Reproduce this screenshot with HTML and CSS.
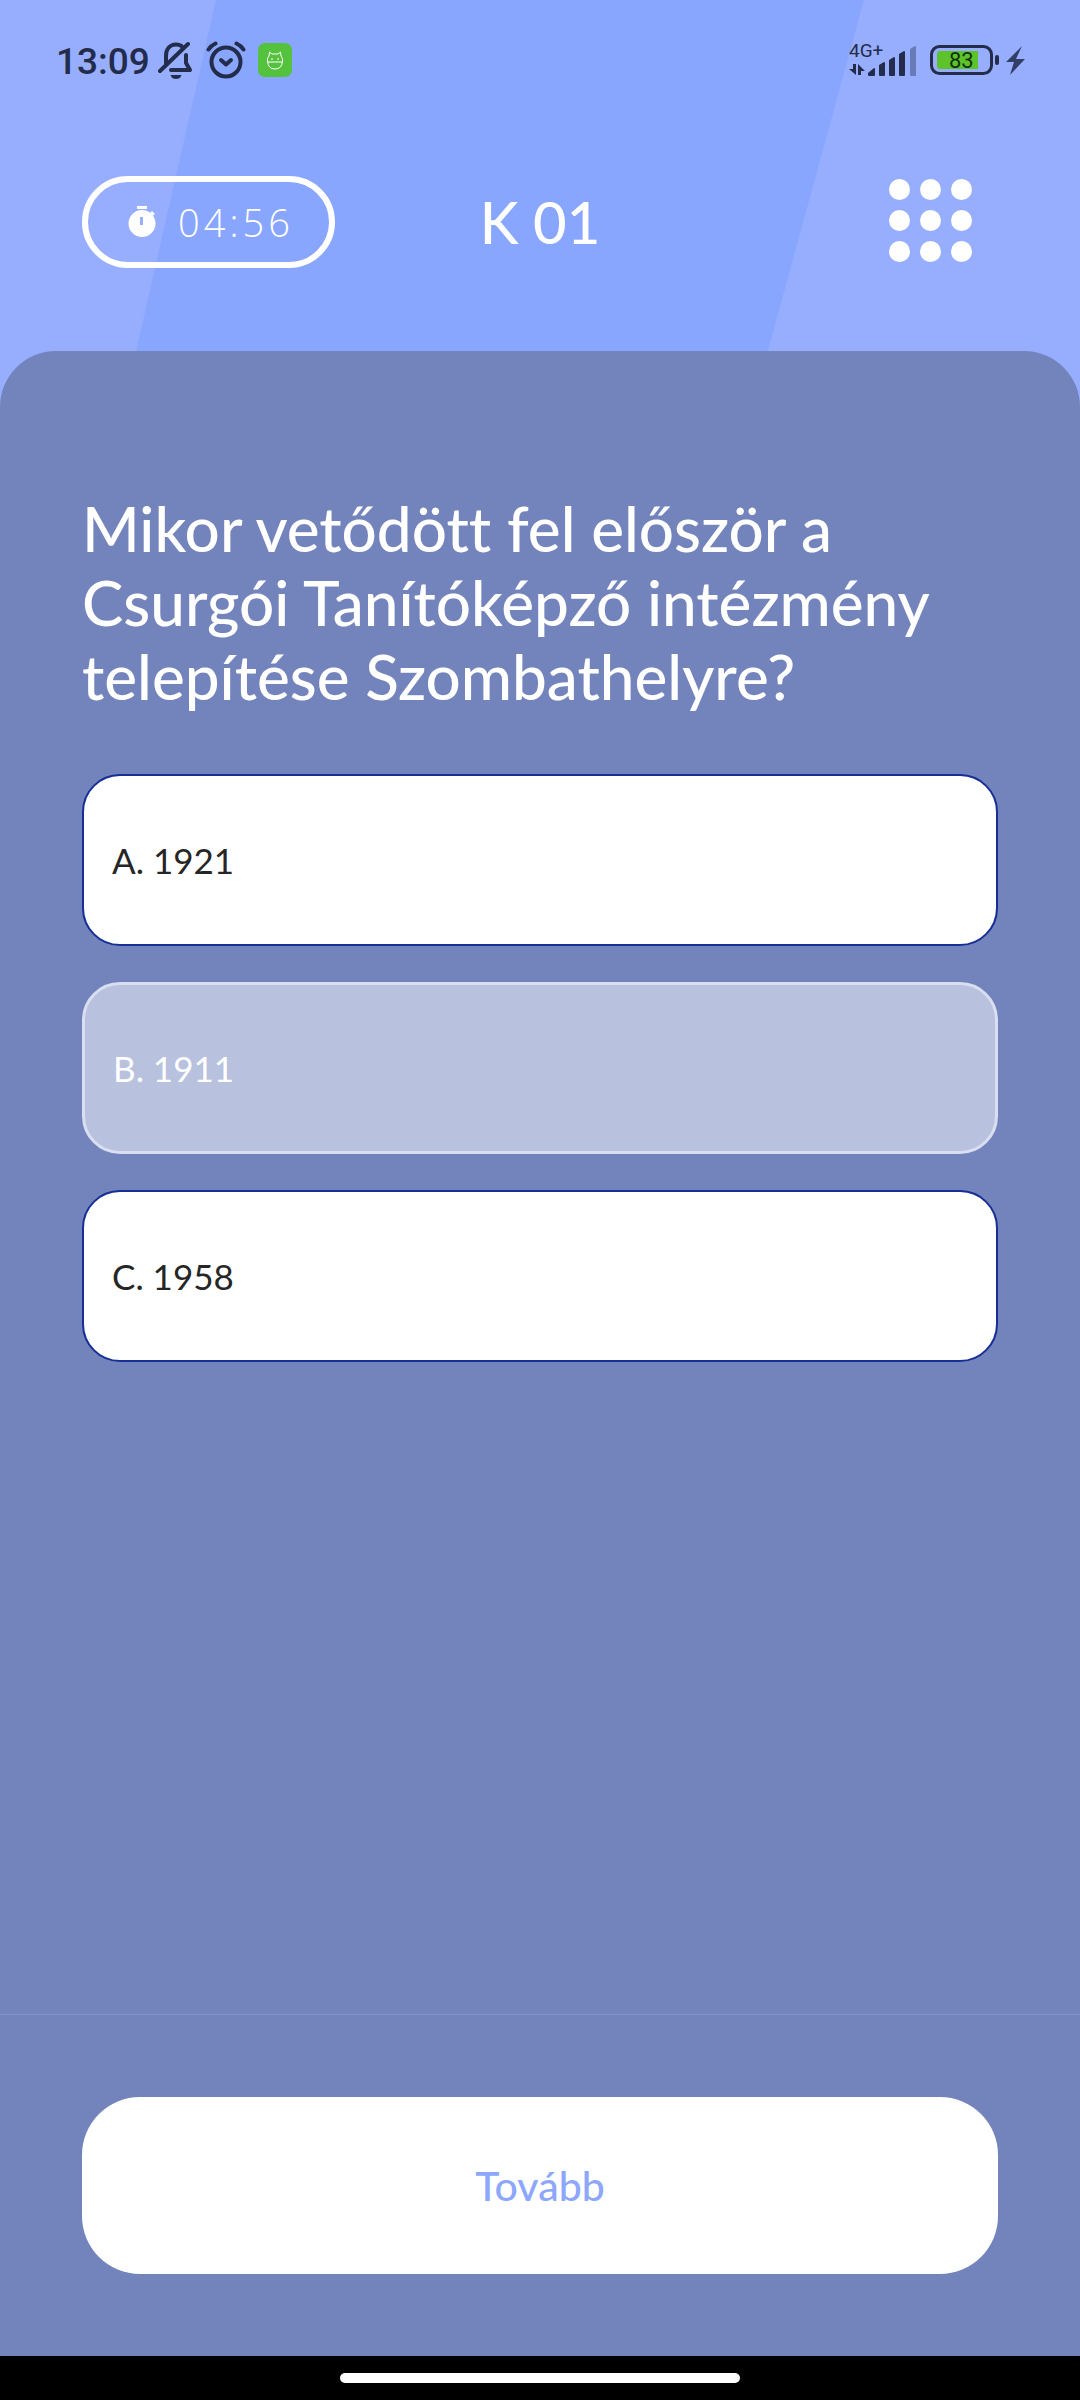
FILE: index.html
```html
<!DOCTYPE html>
<html lang="hu">
<head>
<meta charset="utf-8">
<meta name="viewport" content="width=device-width, initial-scale=1">
<title>K 01</title>
<link rel="stylesheet" href="styles.css">
</head>
<body>
<div class="app">
  <div class="status">
    <div class="status-group">
      <span class="clock">13:09</span>
      <svg class="icon-bell" width="36" height="40" viewBox="0 0 36 40" fill="none" stroke="#232c4a" stroke-width="4" stroke-linejoin="round" stroke-linecap="round" aria-hidden="true">
        <path d="M8 23V16C8 9 12 4.500 18 4.500C20 4.500 22 5 23.500 6"/>
        <path d="M28 15V23L32 30H13"/>
        <path d="M2 31L30 4"/>
        <path d="M12.500 35H23.500C22.500 38 20.500 39 18 39S13.500 38 12.500 35Z" fill="#232c4a" stroke="none"/>
      </svg>
      <svg class="icon-alarm" width="40" height="38" viewBox="0 0 40 38" fill="none" stroke="#232c4a" stroke-width="4" stroke-linecap="round" stroke-linejoin="round" aria-hidden="true">
        <circle cx="20" cy="21" r="14.500"/>
        <path d="M15 19L20 23.500L25 19"/>
        <path d="M2.500 8.500Q5 4.500 9.500 2.500M30.500 2.500Q35 4.500 37.500 8.500"/>
      </svg>
      <svg class="icon-app" width="34" height="34" viewBox="0 0 34 34" aria-hidden="true">
        <rect width="34" height="34" rx="7" fill="#54c23d"/>
        <g fill="none" stroke="#fff" stroke-width="1">
          <path d="M11 13L11.500 9L14 11H20L22.500 9L23 13Q25 15 24.500 18Q24 26 17 26T9.500 18Q9 15 11 13Z"/>
          <path d="M9.500 19H24.500M14 15V17M20 15V17"/>
        </g>
      </svg>
    </div>
    <svg class="icon-signal" width="178" height="40" viewBox="0 0 178 40" role="img" aria-label="4G+, 83%">
      <text class="network" x="1" y="17" fill="#232c4a">4G+</text>
      <g fill="#232c4a">
        <path d="M5 24H8V35L1 29H5ZM10 24L17 31H13V35H10Z"/>
        <path d="M20 33L26 28Q27 28 27 29V35Q27 36 26 36H21Q20 36 20 35Z"/>
        <path d="M31 25L36 22Q37 22 37 23V35Q37 36 36 36H32Q31 36 31 35Z"/>
        <path d="M41 20L46 17Q47 17 47 18V35Q47 36 46 36H42Q41 36 41 35Z"/>
        <path d="M51 14L56 11Q57 11 57 12V35Q57 36 56 36H52Q51 36 51 35Z"/>
        <path d="M62 9L67 6Q68 6 68 7V35Q68 36 67 36H63Q62 36 62 35Z" opacity=".4"/>
      </g>
      <rect x="83.500" y="6.500" width="60" height="27" rx="8" fill="none" stroke="#232c4a" stroke-width="3"/>
      <path d="M92 11H130V29H92Q89 29 89 26V14Q89 11 92 11Z" fill="#5cc32b"/>
      <rect x="147" y="15" width="4" height="10" rx="2" fill="#232c4a"/>
      <text class="charge" x="101" y="28" fill="#12310b">83</text>
      <path d="M174 6L158 22H166L162 35L177 19H168Z" fill="#323e67"/>
    </svg>
  </div>

  <header class="header">
    <div class="timer">
      <svg width="28" height="32" viewBox="0 0 28 32" aria-hidden="true">
        <path d="M9 0H19V3H9ZM22 7L24 5L27 8L24.500 10Z" fill="#fff"/>
        <path fill-rule="evenodd" d="M14 4A13.500 13.500 0 1 1 14 31A13.500 13.500 0 1 1 14 4ZM12 11V19H15V11Z" fill="#fff"/>
      </svg>
      <span>04:56</span>
    </div>
    <h1 class="title">K 01</h1>
    <button class="menu" type="button" aria-label="Menü">
      <svg width="83" height="83" viewBox="0 0 83 83" fill="#fff" aria-hidden="true">
        <circle cx="10.500" cy="10.500" r="10.500"/><circle cx="41.500" cy="10.500" r="10.500"/><circle cx="72.500" cy="10.500" r="10.500"/>
        <circle cx="10.500" cy="41.500" r="10.500"/><circle cx="41.500" cy="41.500" r="10.500"/><circle cx="72.500" cy="41.500" r="10.500"/>
        <circle cx="10.500" cy="72.500" r="10.500"/><circle cx="41.500" cy="72.500" r="10.500"/><circle cx="72.500" cy="72.500" r="10.500"/>
      </svg>
    </button>
  </header>

  <main class="panel">
    <form class="quiz">
      <h2 class="question" id="question">Mikor vetődött fel először a Csurgói Tanítóképző intézmény telepítése Szombathelyre?</h2>
      <div class="answers" role="radiogroup" aria-labelledby="question">
        <label class="answer"><input type="radio" name="answer" value="a"><span>A. 1921</span></label>
        <label class="answer"><input type="radio" name="answer" value="b" checked><span>B. 1911</span></label>
        <label class="answer"><input type="radio" name="answer" value="c"><span>C. 1958</span></label>
      </div>
      <div class="footer">
        <button class="next" type="button">Tovább</button>
      </div>
    </form>
  </main>

  <div class="navbar"><div class="handle"></div></div>
</div>
</body>
</html>
```
FILE: styles.css
```css
* {
  box-sizing: border-box;
}

body {
  margin: 0;
  font-family: Lato, sans-serif;
  font-variant-ligatures: none;
  color: #fff;
}

.app {
  position: relative;
  z-index: 0;
  display: flex;
  flex-direction: column;
  min-height: 100vh;
  background: #97aeff;
}

/* Slanted darker band behind the header */
.app::before {
  content: "";
  position: absolute;
  z-index: -1;
  inset: 0 0 auto;
  height: 351px;
  background: #89a6ff;
  clip-path: polygon(20% 0, 80% 0, 71.100% 100%, 12.600% 100%);
}

.status {
  display: flex;
  justify-content: space-between;
  align-items: center;
  height: 120px;
  padding: 0 54px 0 56px;
  font-family: Roboto, sans-serif;
}

.status-group {
  display: flex;
  align-items: center;
  gap: 12px;
}

.clock {
  margin-right: -4px;
  padding-top: 3px;
  font-size: 37px;
  font-weight: 500;
  color: #232c4a;
}

.icon-signal {
  overflow: visible;
}

.network {
  font-size: 19px;
}

.charge {
  font-size: 22px;
}

.header {
  display: grid;
  grid-template-columns: 1fr auto 1fr;
  align-items: center;
  padding: 56px 82px 83px;
}

.timer {
  display: flex;
  align-items: center;
  justify-self: start;
  gap: 22px;
  height: 92px;
  padding: 0 35px 0 40px;
  border: 6px solid #fff;
  border-radius: 46px;
  font-family: "Open Sans", sans-serif;
  font-size: 38px;
  font-weight: 300;
  letter-spacing: 4px;
}

.title {
  margin: 0;
  font-size: 58px;
  font-weight: 500;
  line-height: 74px;
}

.menu {
  justify-self: end;
  display: flex;
  margin-right: 26px;
  padding: 0 0 4px;
  border: 0;
  background: none;
}

.panel {
  flex: 1;
  display: flex;
  border-radius: 56px 56px 0 0;
  background: #7383bc;
}

.quiz {
  flex: 1;
  display: flex;
  flex-direction: column;
  padding-top: 140px;
}

.question {
  margin: 0 82px 61px;
  font-size: 62px;
  font-weight: 500;
  line-height: 74px;
}

.answers {
  flex: 1;
  display: flex;
  flex-direction: column;
  gap: 36px;
  margin: 0 82px;
}

.answer {
  position: relative;
  display: flex;
  align-items: center;
  height: 172px;
  padding: 0 28px;
  border: 2px solid #172e96;
  border-radius: 38px;
  background: #fff;
  color: #262626;
  font-size: 35px;
}

.answer input {
  position: absolute;
  inset: 0;
  margin: 0;
  opacity: 0;
}

.answer:has(input:checked) {
  border: 3px solid #d9def0;
  background: #b8c1de;
  color: #fff;
}

.footer {
  padding: 82px;
  border-top: 1px solid #8090cd;
}

.next {
  display: block;
  width: 100%;
  height: 177px;
  border: 0;
  border-radius: 58px;
  background: #fff;
  color: #8ca7fb;
  font-family: inherit;
  font-size: 41px;
  font-weight: 500;
}

.navbar {
  display: flex;
  justify-content: center;
  align-items: center;
  height: 44px;
  background: #000;
}

.handle {
  width: 37%;
  height: 10px;
  border-radius: 5px;
  background: #fff;
}
```
